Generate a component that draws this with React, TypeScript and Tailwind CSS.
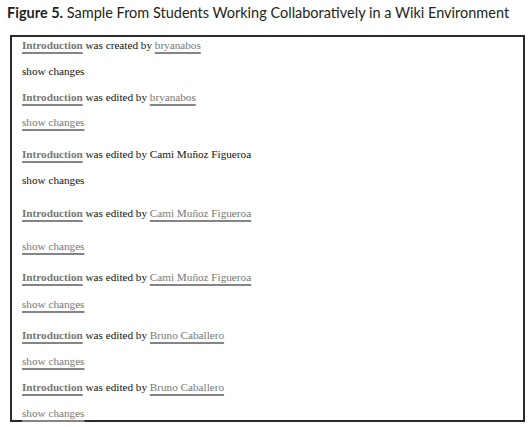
import React from "react"

type Part = { t: string; link?: boolean; bold?: boolean }

const rows: { mt: string; parts: Part[] }[] = [
  { mt: "mt-0", parts: [{ t: "Introduction", link: true, bold: true }, { t: " was created by " }, { t: "bryanabos", link: true }] },
  { mt: "mt-[10px]", parts: [{ t: "show changes" }] },
  { mt: "mt-[10px]", parts: [{ t: "Introduction", link: true, bold: true }, { t: " was edited by " }, { t: "bryanabos", link: true }] },
  { mt: "mt-[9px]", parts: [{ t: "show changes", link: true }] },
  { mt: "mt-[16px]", parts: [{ t: "Introduction", link: true, bold: true }, { t: " was edited by Cami Muñoz Figueroa" }] },
  { mt: "mt-[10px]", parts: [{ t: "show changes" }] },
  { mt: "mt-[17px]", parts: [{ t: "Introduction", link: true, bold: true }, { t: " was edited by " }, { t: "Cami Muñoz Figueroa", link: true }] },
  { mt: "mt-[17px]", parts: [{ t: "show changes", link: true }] },
  { mt: "mt-[15px]", parts: [{ t: "Introduction", link: true, bold: true }, { t: " was edited by " }, { t: "Cami Muñoz Figueroa", link: true }] },
  { mt: "mt-[11px]", parts: [{ t: "show changes", link: true }] },
  { mt: "mt-[15px]", parts: [{ t: "Introduction", link: true, bold: true }, { t: " was edited by " }, { t: "Bruno Caballero", link: true }] },
  { mt: "mt-[10px]", parts: [{ t: "show changes", link: true }] },
  { mt: "mt-[10px]", parts: [{ t: "Introduction", link: true, bold: true }, { t: " was edited by " }, { t: "Bruno Caballero", link: true }] },
  { mt: "mt-[10px]", parts: [{ t: "show changes", link: true }] },
]

function Piece({ p }: { p: Part }) {
  if (!p.link) return <span className="whitespace-pre">{p.t}</span>
  return (
    <span
      className={
        "text-[#777] underline decoration-[#858585] decoration-2 underline-offset-[3px] " +
        (p.bold ? "font-bold" : "")
      }
    >
      {p.t}
    </span>
  )
}

export default function App() {
  return (
    <div className="h-[427px] w-[529px] overflow-hidden bg-white pl-[10px] pt-[3px]">
      <h2 className="ml-[-3px] whitespace-nowrap font-['Lato',sans-serif] text-[14.5px] leading-[20px] text-[#231f20]">
        <span className="font-bold">Figure 5.</span> Sample From Students Working Collaboratively in a Wiki Environment
      </h2>
      <div className="mt-[12px] h-[387px] w-[515px] border-2 border-[#2a2a2a] px-[10px] font-['Liberation_Serif',serif] text-[11.2px] leading-[16px] text-[#111]">
        {rows.map((r, i) => (
          <div key={i} className={r.mt}>
            {r.parts.map((p, j) => (
              <Piece key={j} p={p} />
            ))}
          </div>
        ))}
      </div>
    </div>
  )
}
